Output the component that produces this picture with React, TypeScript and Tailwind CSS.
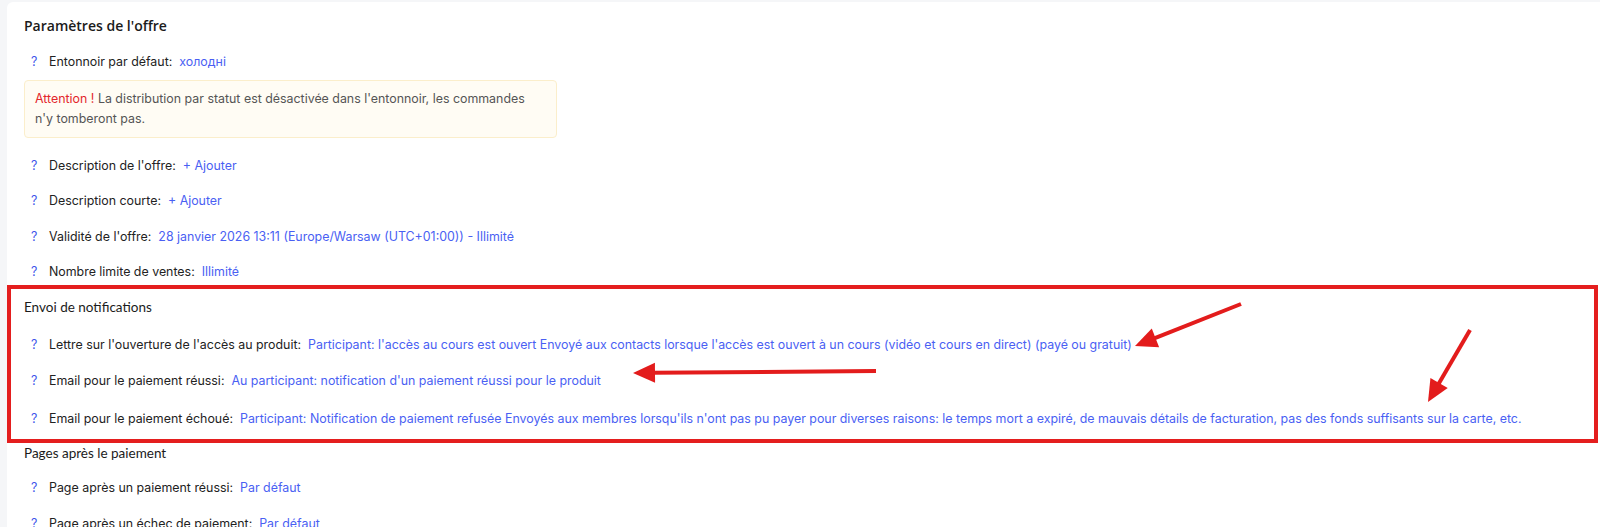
import React from "react";

type Row = { label: string; value: string; mt: string };

const body = { fontFamily: "Inter, 'Noto Sans', sans-serif" };
const head = { fontFamily: "'Open Sans', 'Noto Sans', sans-serif" };
const sub = { fontFamily: "Lato, 'Noto Sans', sans-serif" };

const Setting = ({ label, value, mt }: Row) => (
  <div className={`flex items-center h-5 text-[12.4px] pl-[7px] ${mt}`} style={body}>
    <span className="w-[18px] text-[#3d55ea]">?</span>
    <span className="text-[#222]">{label}:</span>
    <span className="ml-[7px] text-[#4a5ff3] whitespace-nowrap">{value}</span>
  </div>
);

// tail -> tip, drawn as a stroke plus a triangle head
const arrows = [
  { x1: 1241, y1: 304, x2: 1135, y2: 346 },
  { x1: 876, y1: 371, x2: 633, y2: 373 },
  { x1: 1470, y1: 330, x2: 1428, y2: 402 },
];

const Arrow = ({ x1, y1, x2, y2 }: { x1: number; y1: number; x2: number; y2: number }) => {
  const dx = x2 - x1;
  const dy = y2 - y1;
  const len = Math.hypot(dx, dy);
  const ux = dx / len;
  const uy = dy / len;
  const bx = x2 - ux * 22;
  const by = y2 - uy * 22;
  const px = -uy * 10;
  const py = ux * 10;
  return (
    <g>
      <line x1={x1} y1={y1} x2={bx + ux * 2} y2={by + uy * 2} stroke="#e31c1c" strokeWidth={4} />
      <polygon points={`${x2},${y2} ${bx + px},${by + py} ${bx - px},${by - py}`} fill="#e31c1c" />
    </g>
  );
};

export default function App() {
  return (
    <div className="relative w-[1600px] h-[527px] overflow-hidden bg-[#f5f6f8] pl-[7px] pt-[2px]">
      <div className="h-full bg-white rounded-tl-md">
        <div className="pl-[17px] pt-[13px]">
          <div className="h-5 flex items-center text-[14px] font-semibold text-[#1b1b1b]" style={head}>
            Paramètres de l'offre
          </div>
          <Setting label="Entonnoir par défaut" value="холодні" mt="mt-[17px]" />
          <div
            className="mt-[8px] w-[533px] border border-[#fbeecb] bg-[#fffcf4] rounded-[4px] px-[10px] py-[8px] text-[12.4px] leading-5 text-[#555]"
            style={body}
          >
            <span className="text-[#e3262b]">Attention !</span> La distribution par statut est désactivée dans
            l'entonnoir, les commandes n'y tomberont pas.
          </div>
          <Setting label="Description de l'offre" value="+ Ajouter" mt="mt-[18px]" />
          <Setting label="Description courte" value="+ Ajouter" mt="mt-[15px]" />
          <Setting
            label="Validité de l'offre"
            value="28 janvier 2026 13:11 (Europe/Warsaw (UTC+01:00))  - Illimité"
            mt="mt-[16px]"
          />
          <Setting label="Nombre limite de ventes" value="Illimité" mt="mt-[15px]" />
        </div>

        <div className="mt-[3px] mr-[2px] border-4 border-[#e41e1e] pl-[13px] pt-[8px] pb-[10px]">
          <div className="h-5 flex items-center text-[13.5px] text-[#1b1b1b]" style={sub}>
            Envoi de notifications
          </div>
          <Setting
            label="Lettre sur l'ouverture de l'accès au produit"
            value="Participant: l'accès au cours est ouvert Envoyé aux contacts lorsque l'accès est ouvert à un cours (vidéo et cours en direct) (payé ou gratuit)"
            mt="mt-[18px]"
          />
          <Setting
            label="Email pour le paiement réussi"
            value="Au participant: notification d'un paiement réussi pour le produit"
            mt="mt-[16px]"
          />
          <Setting
            label="Email pour le paiement échoué"
            value="Participant: Notification de paiement refusée Envoyés aux membres lorsqu'ils n'ont pas pu payer pour diverses raisons: le temps mort a expiré, de mauvais détails de facturation, pas des fonds suffisants sur la carte, etc."
            mt="mt-[18px]"
          />
        </div>

        <div className="pl-[17px]">
          <div className="h-5 flex items-center text-[13.5px] text-[#1b1b1b]" style={sub}>
            Pages après le paiement
          </div>
          <Setting label="Page après un paiement réussi" value="Par défaut" mt="mt-[15px]" />
          <Setting label="Page après un échec de paiement" value="Par défaut" mt="mt-[16px]" />
        </div>
      </div>

      <svg className="absolute inset-0 pointer-events-none" width={1600} height={527}>
        {arrows.map((a, i) => (
          <Arrow key={i} {...a} />
        ))}
      </svg>
    </div>
  );
}
